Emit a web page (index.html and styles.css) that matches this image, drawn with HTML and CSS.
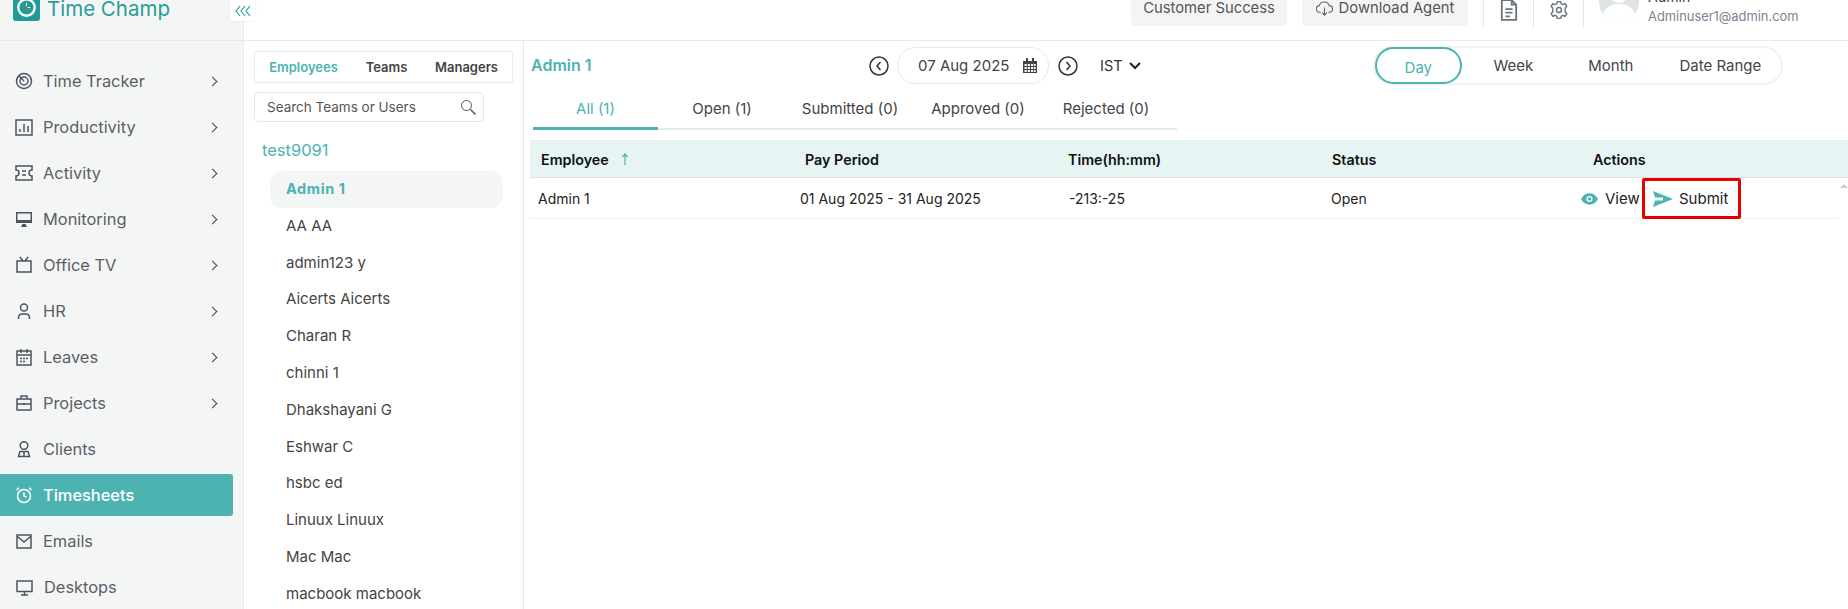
FILE: index.html
```html
<!DOCTYPE html>
<html lang="en">
<head>
<meta charset="utf-8">
<title>Timesheets</title>
<link rel="stylesheet" href="styles.css">
</head>
<body>
<div class="app">
  <header class="topbar">
    <div class="brand">
      <svg class="logo" viewBox="0 0 28 28"><rect width="28" height="28" rx="3" fill="#1f9c97"/><circle cx="14" cy="14" r="8.500" fill="none" stroke="#fff" stroke-width="2.500"/><path d="M14 9v5h4" fill="none" stroke="#fff" stroke-width="1"/><circle cx="14" cy="14" r="1.200" fill="#e0453a"/></svg>
      <span class="brand-name">Time Champ</span>
    </div>
    <button class="collapse"><svg viewBox="0 0 16 12" width="16" height="12"><path d="M5 1 1 6l4 5M10 1 6 6l4 5M15 1l-4 5 4 5" fill="none" stroke="#2a9d99" stroke-width="1.2"/></svg></button>
    <div class="top-actions">
      <span class="top-btn btn-cs">Customer Success</span>
      <span class="top-btn btn-dl"><svg viewBox="0 0 18 18" width="17" height="17"><path d="M5 13H4a3.5 3.5 0 0 1-.5-7A5.5 5.500 0 0 1 14 6a3.5 3.5 0 0 1 0 7h-1M9 8v8M6.5 13.5 9 16l2.5-2.5" fill="none" stroke="#666" stroke-width="1.2"/></svg>Download Agent</span>
      <span class="sep"><svg viewBox="0 0 20 24" width="18" height="22"><path d="M2 1h11l5 5v17H2zM13 1v5h5M6 11h8M6 15h8M6 19h5" fill="none" stroke="#6b7280" stroke-width="2"/></svg></span>
      <span class="sep"><svg viewBox="0 0 24 24" width="20" height="20"><path d="M10 2h4l.7 2.600 2.300 1 2.400-1.300 2 3.400-2 1.900v4.800l2 1.900-2 3.400-2.400-1.300-2.300 1-.7 2.600h-4l-.7-2.600-2.300-1-2.400 1.300-2-3.400 2-1.900V9.600l-2-1.900 2-3.400 2.400 1.300 2.300-1z" fill="none" stroke="#6b7280" stroke-width="1.700" stroke-linejoin="round"/><circle cx="12" cy="12" r="3" fill="none" stroke="#6b7280" stroke-width="1.700"/></svg></span>
      <span class="sep sep-user">
        <span class="avatar"><svg viewBox="0 0 40 40" width="40" height="40"><circle cx="20" cy="20" r="20" fill="#dfe5e7"/><circle cx="20" cy="11" r="10" fill="#fff"/><path d="M4 32c3-8 10-10 16-10s13 2 16 10a20 20 0 0 1-32 0z" fill="#fff"/></svg></span>
        <span class="user-text"><span class="user-name">Admin</span><span class="user-mail">Adminuser1@admin.com</span></span>
        <span class="caret"></span>
      </span>
    </div>
  </header>
  <div class="content">
    <nav class="sidebar">
      <a class="nav-item"><svg class="nav-icon" viewBox="0 0 18 18"><circle cx="9" cy="9" r="7.500"/><circle cx="9" cy="9" r="4"/><path d="M9 9 4 4"/></svg><span class="nav-label">Time Tracker</span><span class="chev"></span></a>
      <a class="nav-item"><svg class="nav-icon" viewBox="0 0 18 18"><rect x="1" y="2" width="16" height="15"/><path d="M5 14v-3M9 14V6M13 14V8"/></svg><span class="nav-label">Productivity</span><span class="chev"></span></a>
      <a class="nav-item"><svg class="nav-icon" viewBox="0 0 18 18"><path d="M1 2h16v4a3 3 0 0 0 0 6v4H1v-4a3 3 0 0 0 0-6zM7 7h4M7 11h4"/></svg><span class="nav-label">Activity</span><span class="chev"></span></a>
      <a class="nav-item"><svg class="nav-icon" viewBox="0 0 18 18"><path class="solid" d="M1 2h16v11H1zM6 17h6l-1.500-3h-3z"/><rect class="hole" x="2.500" y="3.500" width="13" height="6.500"/></svg><span class="nav-label">Monitoring</span><span class="chev"></span></a>
      <a class="nav-item"><svg class="nav-icon" viewBox="0 0 18 18"><rect x="2" y="5" width="14" height="11"/><path d="M5 1l3 4M13 1l-3 4"/></svg><span class="nav-label">Office TV</span><span class="chev"></span></a>
      <a class="nav-item"><svg class="nav-icon" viewBox="0 0 18 18"><circle cx="9" cy="5.500" r="3.500"/><path d="M3.500 17v-1.500A4 4 0 0 1 7.500 12h3a4 4 0 0 1 4 3.500V17"/></svg><span class="nav-label">HR</span><span class="chev"></span></a>
      <a class="nav-item"><svg class="nav-icon" viewBox="0 0 18 18"><rect x="2" y="3" width="14" height="14"/><path d="M2 7h14M6 1v4M12 1v4M5 10.500h2M8 10.500h2M11 10.500h2M5 13.500h2M8 13.500h2"/></svg><span class="nav-label">Leaves</span><span class="chev"></span></a>
      <a class="nav-item"><svg class="nav-icon" viewBox="0 0 18 18"><rect x="2" y="5" width="14" height="11"/><path d="M6 5V2h6v3M2 10h14M9 9v2"/></svg><span class="nav-label">Projects</span><span class="chev"></span></a>
      <a class="nav-item"><svg class="nav-icon" viewBox="0 0 18 18"><circle cx="9" cy="5.500" r="3.800"/><path d="M3.500 16.500 5 11.500h8l1.500 5zM9 12v4"/></svg><span class="nav-label">Clients</span></a>
      <a class="nav-item active"><svg class="nav-icon" viewBox="0 0 18 18"><circle cx="9" cy="10" r="6.500"/><path d="M9 6.500V10l2.500 1M1.500 4 4 1.800M16.500 4 14 1.800"/></svg><span class="nav-label">Timesheets</span></a>
      <a class="nav-item"><svg class="nav-icon" viewBox="0 0 18 18"><rect x="2" y="3" width="14" height="13"/><path d="m2 4 7 6 7-6"/></svg><span class="nav-label">Emails</span></a>
      <a class="nav-item nav-shift"><svg class="nav-icon" viewBox="0 0 18 18"><rect x="2" y="3" width="15" height="10.500"/><path d="M9.500 13.500V17M6 17h7"/></svg><span class="nav-label">Desktops</span></a>
    </nav>

    <aside class="panel">
      <div class="panel-tabs"><span class="panel-tab on">Employees</span><span class="panel-tab">Teams</span><span class="panel-tab">Managers</span></div>
      <div class="search"><span>Search Teams or Users</span><svg viewBox="0 0 16 16" width="16" height="16"><circle cx="6.500" cy="6.500" r="5" fill="none" stroke="#555" stroke-width="1"/><path d="m10.500 10.500 5 5" stroke="#555" stroke-width="1.500"/></svg></div>
      <div class="team">test9091</div>
      <ul class="people">
        <li class="selected">Admin 1</li>
        <li>AA AA</li>
        <li>admin123 y</li>
        <li>Aicerts Aicerts</li>
        <li>Charan R</li>
        <li>chinni 1</li>
        <li>Dhakshayani G</li>
        <li>Eshwar C</li>
        <li>hsbc ed</li>
        <li>Linuux Linuux</li>
        <li>Mac Mac</li>
        <li>macbook macbook</li>
      </ul>
    </aside>

    <main class="main">
      <div class="toolbar">
        <div class="page-title">Admin 1</div>
        <div class="date-group">
          <svg class="round" viewBox="0 0 20 20"><circle cx="10" cy="10" r="9"/><path d="M11.500 6 8 10l3.500 4"/></svg>
          <div class="date-pill"><span>07 Aug 2025</span><svg viewBox="0 0 14 15" width="14" height="15"><path d="M0 3h14v12H0z" fill="#444"/><path d="M3 0h2v4H3zM9 0h2v4H9z" fill="#444"/><path d="M1.500 6h2.300v2H1.500zM4.700 6H7v2H4.700zM8 6h2.300v2H8zM11 6h1.700v2H11zM1.500 9h2.300v2H1.500zM4.700 9H7v2H4.700zM8 9h2.300v2H8zM11 9h1.700v2H11zM1.500 12h2.300v2H1.500zM4.700 12H7v2H4.700zM8 12h2.300v2H8zM11 12h1.700v2H11z" fill="#f2f2f2"/></svg></div>
          <svg class="round" viewBox="0 0 20 20"><circle cx="10" cy="10" r="9"/><path d="M8.500 6 12 10l-3.500 4"/></svg>
          <div class="tz"><span>IST</span><svg viewBox="0 0 12 8" width="12" height="8"><path d="m1 1 5 5 5-5" fill="none" stroke="#222" stroke-width="2"/></svg></div>
        </div>
        <div class="range">
          <span class="range-item on">Day</span>
          <span class="range-item w2">Week</span>
          <span class="range-item w3">Month</span>
          <span class="range-item w4">Date Range</span>
        </div>
      </div>
      <div class="tabs">
        <span class="tab on">All (1)</span>
        <span class="tab">Open (1)</span>
        <span class="tab">Submitted (0)</span>
        <span class="tab">Approved (0)</span>
        <span class="tab">Rejected (0)</span>
      </div>
      <div class="table">
        <div class="thead">
          <span class="th">Employee<svg viewBox="0 0 8 12" width="8" height="12"><path d="M4 12V2M1.500 4 4 1l2.500 3" fill="none" stroke="#4db3b1" stroke-width="1.200"/></svg></span>
          <span class="th">Pay Period</span>
          <span class="th">Time(hh:mm)</span>
          <span class="th">Status</span>
          <span class="th">Actions</span>
        </div>
        <div class="tbody-row">
          <span>Admin 1</span>
          <span>01 Aug 2025 - 31 Aug 2025</span>
          <span>-213:-25</span>
          <span>Open</span>
          <span class="actions">
            <span class="act-view"><svg viewBox="0 0 18 12" width="17" height="12"><path d="M0 6c2-4 5.500-6 9-6s7 2 9 6c-2 4-5.500 6-9 6s-7-2-9-6z" fill="#4db3b1"/><circle cx="9" cy="6" r="3.200" fill="#fff"/><circle cx="9" cy="6" r="1.800" fill="#4db3b1"/></svg>View</span>
            <span class="act-submit"><svg viewBox="0 0 20 16" width="20" height="16"><path d="M0 0l20 8L0 16l2-6.500h8v-3H2z" fill="#4db3b1"/></svg>Submit</span>
          </span>
        </div>
        <span class="scroll-up"></span>
      </div>
    </main>
  </div>
</div>
</body>
</html>
```

FILE: styles.css
```css
* { box-sizing: border-box; }
html, body { margin: 0; height: 100%; }
body { font-family: Inter, "Open Sans", "Liberation Sans", sans-serif; color: #333; background: #fff; overflow: hidden; }
ul { list-style: none; margin: 0; padding: 0; }
.app { width: 1848px; height: 609px; display: flex; flex-direction: column; overflow: hidden; }

.topbar { height: 41px; flex: none; display: flex; align-items: flex-end; border-bottom: 1px solid #e8eaea; position: relative; background: linear-gradient(to right, #f4f6f6 243px, #e8eaea 243px, #e8eaea 244px, #fff 244px); overflow: hidden; }
.brand { width: 230px; flex: none; height: 60px; padding: 0 0 19px 13px; display: flex; align-items: flex-end; gap: 7px; }
.logo { width: 27px; height: 27px; flex: none; }
.brand-name { font-size: 20.500px; line-height: 27px; color: #2a9d99; position: relative; top: 1px; white-space: nowrap; }
.collapse { width: 25px; height: 21px; margin-bottom: 19px; padding: 0; flex: none; border: 0; border-radius: 0 0 4px 4px; background: #fff; box-shadow: 0 0 3px rgba(0,0,0,.08); display: flex; align-items: center; justify-content: center; }
.top-actions { flex: 1; display: flex; align-items: flex-end; padding-left: 876px; height: 60px; padding-bottom: 14px; }
.top-btn { height: 38px; background: #f4f4f4; border-radius: 4px; display: flex; align-items: center; justify-content: center; gap: 6px; padding-top: 2px; font-size: 14.800px; color: #555; white-space: nowrap; }
.btn-cs { width: 156px; margin-right: 15px; }
.btn-dl { width: 166px; margin-right: 15px; }
.sep { height: 40px; width: 50px; flex: none; border-left: 1px solid #e8e8e8; display: flex; align-items: center; justify-content: center; padding-top: 3px; margin-bottom: -2px; }
.sep-user { width: 265px; justify-content: flex-start; padding: 0 0 0 15px; align-items: flex-end; position: relative; }
.avatar { width: 40px; height: 40px; flex: none; margin-bottom: 6px; }
.user-text { display: flex; flex-direction: column; margin-left: 9px; margin-bottom: 2px; }
.user-name { font-size: 14px; line-height: 22px; color: #444; }
.user-mail { font-size: 12.900px; line-height: 18px; color: #7d8494; white-space: nowrap; }
.caret { margin: 0 0 31px 24px; border: 4px solid transparent; border-top: 5px solid #777; border-bottom: 0; }

.content { flex: 1; display: flex; min-height: 0; }
.sidebar { width: 244px; flex: none; background: #f4f6f6; border-right: 1px solid #e8eaea; padding-top: 19px; overflow: hidden; }
.nav-item { height: 42px; margin: 0 10px 4px 0; display: flex; align-items: center; padding-left: 15px; font-size: 16.400px; color: #5a5f66; border-radius: 0 3px 3px 0; }
.nav-icon { width: 18px; height: 18px; flex: none; fill: none; stroke: #4a5560; stroke-width: 1.500; margin-right: 10px; }
.nav-icon .solid { fill: #4a5560; stroke: none; }
.nav-icon .hole { fill: #f4f6f6; stroke: none; }
.nav-label { flex: 1; white-space: nowrap; }
.chev { width: 7px; height: 7px; border-top: 1.500px solid #444; border-right: 1.500px solid #444; transform: rotate(45deg); margin-right: 17px; }
.nav-item.active { background: #4db3b1; color: #fff; font-weight: 500; }
.nav-item.active .nav-icon { stroke: #fff; }
.nav-shift .nav-label { margin-left: 1px; }

.panel { width: 280px; flex: none; border-right: 1px solid #e8eaea; padding: 10px 10px 0 10px; overflow: hidden; }
.panel-tabs { width: 259px; height: 32px; border: 1px solid #ececec; display: flex; align-items: center; font-size: 13px; font-weight: 600; color: #444; }
.panel-tab:nth-child(1) { width: 97px; text-align: center; }
.panel-tab:nth-child(2) { width: 69px; text-align: center; }
.panel-tab:nth-child(3) { width: 91px; text-align: center; }
.panel-tab.on { color: #4db3b1; }
.search { width: 230px; height: 30px; margin-top: 9px; border: 1px solid #e8e8e8; border-radius: 4px; display: flex; align-items: center; justify-content: space-between; padding: 0 7px 0 12px; font-size: 13.500px; color: #555; white-space: nowrap; }
.team { margin: 17px 0 0 8px; font-size: 16.500px; line-height: 22px; color: #4db3b1; }
.people { margin: 10px 0 0 16px; width: 233px; }
.people li { height: 36.800px; line-height: 36.800px; padding-left: 16px; font-size: 15px; color: #444; white-space: nowrap; }
.people li.selected { color: #4db3b1; font-weight: 700; font-size: 14.500px; letter-spacing: .6px; background: #f4f6f6; border-radius: 12px; }

.main { flex: 1; min-width: 0; }
.toolbar { height: 39px; margin-top: 5px; display: flex; align-items: center; padding-left: 7px; }
.page-title { width: 338px; font-size: 16px; font-weight: 600; color: #4db3b1; padding-bottom: 2px; }
.date-group { display: flex; align-items: center; }
.round { width: 20px; height: 20px; fill: none; stroke: #333; stroke-width: 1.500; flex: none; }
.date-pill { width: 152px; height: 37px; margin: 0 9px 0 8px; border: 1px solid #e8e8e8; border-radius: 19px; display: flex; align-items: center; justify-content: space-between; padding: 0 11px 0 20px; font-size: 15px; color: #444; white-space: nowrap; }
.tz { display: flex; align-items: center; gap: 6px; margin-left: 22px; font-size: 14.500px; color: #333; }
.range { margin-left: auto; margin-right: 65px; width: 410px; height: 39px; border: 2px solid #f0f3f3; border-radius: 20px; display: flex; align-items: center; font-size: 15px; color: #444; }
.range-item { text-align: center; white-space: nowrap; padding-bottom: 1px; }
.range-item.on { width: 87px; height: 37px; margin-left: 0; line-height: 38px; color: #4db3b1; border: 2px solid #4db3b1; border-radius: 19px; padding: 0; }
.w2 { width: 98px; margin-left: 3px; }
.w3 { width: 98px; }
.w4 { width: 122px; }

.tabs { margin: 5px 0 0 9px; width: 644px; height: 40px; border-bottom: 2px solid #e8eaea; display: flex; }
.tab { width: 128px; height: 40px; line-height: 38px; text-align: center; font-size: 15px; color: #444; white-space: nowrap; }
.tab.on { width: 125px; color: #4db3b1; border-bottom: 3px solid #4db3b1; }

.table { margin: 10px 0 0 6px; position: relative; }
.thead { height: 38px; background: #e6f4f3; border-top: 1px solid #e3eeee; border-bottom: 1px solid #d8e2e2; display: grid; grid-template-columns: 264px 263px 264px 261px 1fr; align-items: center; padding-left: 11px; font-size: 14.300px; font-weight: 600; color: #111; }
.th { display: flex; align-items: center; gap: 12px; white-space: nowrap; }
.tbody-row { height: 41px; margin-right: 10px; border-bottom: 1px solid #eef0f0; display: grid; grid-template-columns: 262px 269px 262px 250px 1fr; align-items: center; padding-left: 8px; font-size: 14px; color: #222; white-space: nowrap; }
.actions { display: flex; align-items: center; height: 41px; font-size: 15px; }
.act-view { display: flex; align-items: center; gap: 7px; width: 61px; }
.act-submit { width: 99px; height: 41px; border: 3px solid #e60000; border-radius: 2px; display: flex; align-items: center; gap: 6px; padding-left: 8px; }
.scroll-up { position: absolute; right: 0; top: 44px; border: 4px solid transparent; border-bottom: 4px solid #ccc; border-top: 0; }
```
